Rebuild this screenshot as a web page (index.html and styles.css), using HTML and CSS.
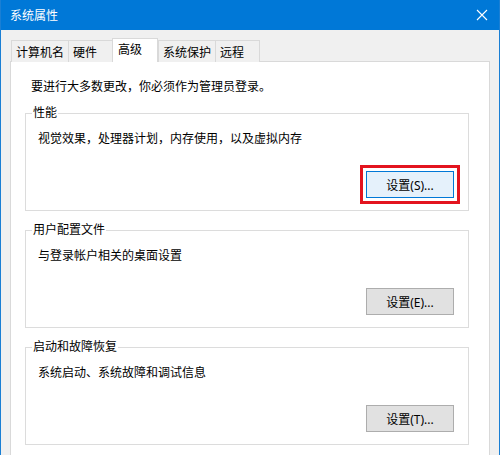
FILE: index.html
```html
<!DOCTYPE html>
<html lang="zh-CN">
<head>
    <meta charset="UTF-8">
    <meta name="viewport" content="width=device-width, initial-scale=1.0">
    <title>系统属性</title>
    <link rel="stylesheet" href="styles.css">
</head>
<body>
    <div class="window">
        <div class="titlebar">
            <span class="title">系统属性</span>
            <svg class="close" width="12" height="12" viewBox="0 0 12 12">
                <path d="M1 1 L11 11 M11 1 L1 11" stroke="#fff" stroke-width="1.1" fill="none"/>
            </svg>
        </div>

        <div class="client">
            <div class="tabs">
                <div class="tab">计算机名</div>
                <div class="tab">硬件</div>
                <div class="tab active">高级</div>
                <div class="tab">系统保护</div>
                <div class="tab">远程</div>
            </div>

            <div class="panel">
                <p class="note">要进行大多数更改，你必须作为管理员登录。</p>

                <fieldset class="group">
                    <legend>性能</legend>
                    <p class="desc">视觉效果，处理器计划，内存使用，以及虚拟内存</p>
                    <button class="btn focused">设置(S)...</button>
                </fieldset>

                <fieldset class="group">
                    <legend>用户配置文件</legend>
                    <p class="desc">与登录帐户相关的桌面设置</p>
                    <button class="btn">设置(E)...</button>
                </fieldset>

                <fieldset class="group">
                    <legend>启动和故障恢复</legend>
                    <p class="desc">系统启动、系统故障和调试信息</p>
                    <button class="btn">设置(T)...</button>
                </fieldset>
            </div>
        </div>
    </div>
</body>
</html>
```

FILE: styles.css
```css
* {
    box-sizing: border-box;
}

body , html {
    margin: 0;
    padding: 0;
}

body {
    font-family: "Noto Sans", "Noto Sans CJK SC", sans-serif;
    font-size: 12px;
    line-height: 16px;
    color: #000;
    overflow: hidden;
}

.window {
    width: 500px;
    height: 455px;
    display: flex;
    flex-direction: column;
    border-left: 1px solid #1a7fd4;
    border-right: 1px solid #1a7fd4;
}

.titlebar {
    height: 30px;
    flex-shrink: 0;
    display: flex;
    align-items: center;
    justify-content: space-between;
    padding: 0 11px 0 9px;
    background-color: #0078d7;
    color: #fff;
}

.title {
    margin-top: 1px;
}

.close {
    display: block;
}

.client {
    flex: 1;
    display: flex;
    flex-direction: column;
    background-color: #f0f0f0;
    padding: 8px 9px 0 9px;
}

/* tab strip */
.tabs {
    display: flex;
    align-items: flex-end;
    padding-left: 1px;
    margin-bottom: -1px;
    position: relative;
    z-index: 1;
}

.tab {
    min-width: 45px;
    height: 22px;
    padding: 4px 4px 0 4px;
    margin-right: -1px;
    border: 1px solid #d9d9d9;
    border-bottom: none;
    background-color: #f0f0f0;
    white-space: nowrap;
}

.tab.active {
    min-width: 46px;
    height: 24px;
    padding: 3px 3px 0 5px;
    margin-right: 0;
    background-color: #fff;
    position: relative;
    z-index: 2;
}

/* page */
.panel {
    flex: 1;
    background-color: #fff;
    border: 1px solid #d9d9d9;
    border-bottom: none;
    padding: 0 20px 0 14px;
}

.note {
    margin: 17px 0 10px 6px;
}

.group {
    display: flex;
    flex-direction: column;
    margin: 0 0 11px 0;
    padding: 10px 14px 12px 12px;
    border: 1px solid #dcdcdc;
    min-inline-size: 0;
}

.group legend {
    padding: 0 1px;
    margin-left: -6px;
}

.desc {
    margin: 0 0 24px 0;
}

.btn {
    align-self: flex-end;
    width: 88px;
    height: 27px;
    padding: 0;
    font-family: inherit;
    font-size: 12px;
    color: #000;
    background-color: #e1e1e1;
    border: 1px solid #adadad;
}

.btn.focused {
    background-color: #e5f1fb;
    border-color: #0078d7;
    outline: 3px solid #e3141f;
    outline-offset: 3px;
}
```
